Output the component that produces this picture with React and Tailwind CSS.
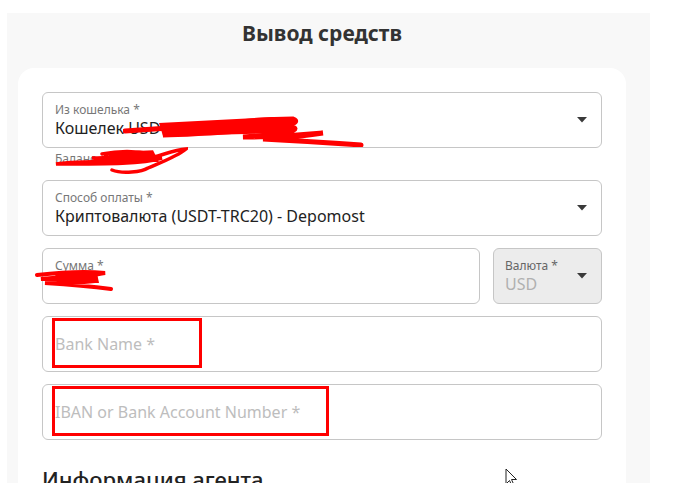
import React from "react";

const font = { fontFamily: '"Noto Sans", "Open Sans", sans-serif' };

function Caret() {
  return (
    <svg width="10" height="6" viewBox="0 0 10 6" className="shrink-0">
      <path d="M0 0 L10 0 L5 5.5 Z" fill="#3a3a3a" />
    </svg>
  );
}

function SelectField({ label, value, children }) {
  return (
    <div className="relative flex h-[56px] items-center rounded-[6px] border border-[#c6c6c6] bg-white pl-[12px] pr-[14px]">
      <div className="flex-1">
        <div className="text-[12px] leading-[16px] text-[#777]">{label}</div>
        <div className="text-[16px] leading-[20px] text-[#222]">{value}</div>
      </div>
      <Caret />
      {children}
    </div>
  );
}

function PlaceholderField({ text, boxWidth }) {
  return (
    <div className="relative flex h-[56px] items-center rounded-[6px] border border-[#c6c6c6] bg-white pl-[12px]">
      <span className="text-[16px] text-[#bdbdbd]">{text}</span>
      <div
        className="absolute left-[9px] top-[1px] h-[50px] border-[3px] border-[#ff0000]"
        style={{ width: boxWidth }}
      />
    </div>
  );
}

export default function App() {
  return (
    <div className="relative h-[483px] w-[676px] overflow-hidden bg-white" style={font}>
      <div className="ml-[7px] mt-[13px] h-[470px] w-[643px] bg-[#f8f8f8]">
        <div className="w-[630px] pt-[6px] text-center text-[21px] font-bold leading-[28px] text-[#333]">
          Вывод средств
        </div>
        <div className="ml-[11px] mt-[21px] h-[430px] w-[608px] rounded-t-[16px] bg-white px-[24px] pt-[24px]">
          <SelectField label="Из кошелька *" value="Кошелек USD">
            <svg
              className="absolute left-[80px] top-[18px]"
              width="242"
              height="36"
              viewBox="0 0 242 36"
            >
              <path
                d="M2 20 C30 18 60 16 90 14 C120 10 150 8 170 8 C180 12 160 16 130 18 C100 20 60 22 40 24 C70 24 120 20 170 16 C180 20 150 24 120 26 C150 26 180 24 200 22 C170 26 150 28 140 28 C180 30 210 32 238 34"
                fill="none"
                stroke="#ff0000"
                strokeWidth="5"
                strokeLinecap="round"
              />
              <path d="M36 12 L150 6 L172 10 L168 22 L40 25 Z" fill="#ff0000" />
            </svg>
          </SelectField>

          <div className="relative h-[32px] pl-[13px] pt-[3px] text-[12px] leading-[16px] text-[#777]">
            Баланс
            <svg
              className="absolute left-[10px] top-[-2px]"
              width="136"
              height="30"
              viewBox="0 0 136 30"
            >
              <path
                d="M50 8 C70 4 90 6 100 8 C80 10 60 12 40 12 C60 14 90 14 110 12 C90 18 60 18 4 18 C30 14 70 16 90 14 C110 10 120 4 134 3 C126 10 110 16 96 22 C90 26 70 28 60 24 M55 8 L100 6 L104 14 L50 16 Z"
                fill="none"
                stroke="#ff0000"
                strokeWidth="3.5"
                strokeLinecap="round"
              />
              <path d="M58 8 L98 7 L100 13 L52 15 Z" fill="#ff0000" />
            </svg>
          </div>

          <SelectField label="Способ оплаты *" value="Криптовалюта (USDT-TRC20) - Depomost" />

          <div className="mt-[12px] flex gap-[13px]">
            <div className="relative flex h-[56px] flex-1 items-center rounded-[6px] border border-[#c6c6c6] bg-white pl-[12px]">
              <div>
                <div className="text-[12px] leading-[16px] text-[#777]">Сумма *</div>
                <div className="h-[20px]" />
              </div>
              <svg
                className="absolute left-[-8px] top-[20px]"
                width="80"
                height="22"
                viewBox="0 0 80 22"
              >
                <path
                  d="M2 6 C20 4 50 2 70 4 C50 8 20 8 6 10 C30 10 50 10 60 12 C40 14 20 14 10 14 C40 16 60 18 76 20"
                  fill="none"
                  stroke="#ff0000"
                  strokeWidth="4"
                  strokeLinecap="round"
                />
                <path d="M20 5 L62 4 L64 14 L22 14 Z" fill="#ff0000" />
              </svg>
            </div>
            <div className="flex h-[56px] w-[109px] items-center rounded-[6px] border border-[#c6c6c6] bg-[#ececec] pl-[11px] pr-[14px]">
              <div className="flex-1">
                <div className="text-[12px] leading-[16px] text-[#666]">Валюта *</div>
                <div className="text-[16px] leading-[20px] text-[#b0b0b0]">USD</div>
              </div>
              <Caret />
            </div>
          </div>

          <div className="mt-[12px]">
            <PlaceholderField text="Bank Name *" boxWidth="150px" />
          </div>
          <div className="mt-[12px]">
            <PlaceholderField text="IBAN or Bank Account Number *" boxWidth="277px" />
          </div>

          <div className="mt-[24px] text-[22px] font-medium leading-[30px] text-[#222]">
            Информация агента
          </div>
        </div>
      </div>

      {/* mouse pointer */}
      <svg className="absolute left-[505px] top-[468px]" width="14" height="20" viewBox="0 0 14 20">
        <path d="M1 1 L1 16 L4.5 12.5 L7 18 L9 17 L6.5 11.5 L11.5 11.5 Z" fill="#fff" stroke="#222" strokeWidth="1" />
      </svg>
    </div>
  );
}
